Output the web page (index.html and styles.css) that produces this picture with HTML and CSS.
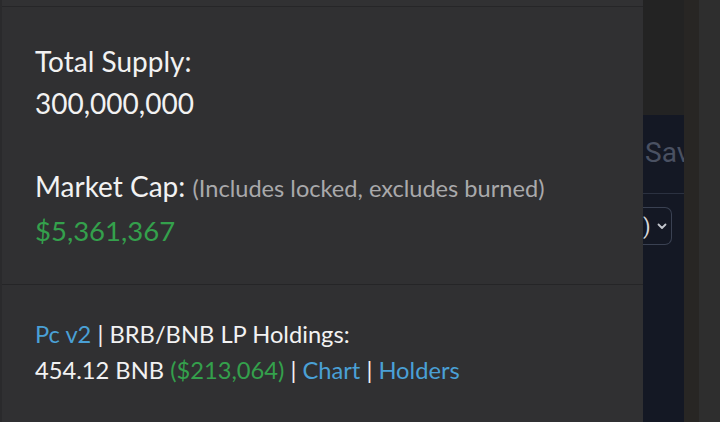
FILE: index.html
```html
<!DOCTYPE html>
<html>
<head>
<meta charset="utf-8">
<link rel="stylesheet" href="styles.css">
</head>
<body>
<div class="page">
  <div class="panel">
    <div class="panel-top"></div>
    <section class="stats">
      <p class="stat">
        <span class="label">Total Supply:</span><br>
        <span class="value">300,000,000</span>
      </p>
      <p class="stat">
        <span class="label">Market Cap:</span> <span class="note">(Includes locked, excludes burned)</span><br>
        <span class="green big">$5,361,367</span>
      </p>
    </section>
    <section class="lp">
      <p class="lp-text">
        <a class="link">Pc v2</a> | BRB/BNB LP Holdings:<br>
        454.12 BNB <span class="green">($213,064)</span> | <a class="link">Chart</a> | <a class="link">Holders</a>
      </p>
    </section>
  </div>
  <div class="behind">
    <div class="behind-top"></div>
    <div class="navy">
      <div class="navy-head"><span class="save">Save</span></div>
      <div class="navy-row">
        <div class="select"><span class="paren">)</span>
          <svg class="chev" width="10" height="7" viewBox="0 0 10 7"><path d="M1.5 1.5 L5 5 L8.5 1.5" fill="none" stroke="#c3c6cd" stroke-width="1.8" stroke-linecap="round" stroke-linejoin="round"/></svg>
        </div>
      </div>
    </div>
  </div>
  <div class="strip-a"></div>
  <div class="strip-b"></div>
</div>
</body>
</html>
```

FILE: styles.css
```css
html, body {
  margin: 0;
  padding: 0;
  background: #222222;
}
.page {
  display: flex;
  width: 720px;
  height: 422px;
  overflow: hidden;
  font-family: Lato, "Noto Sans", sans-serif;
}
.panel {
  width: 641px;
  flex: none;
  background: #303032;
  border-left: 2px solid #2a2a2c;
  display: flex;
  flex-direction: column;
}
.panel-top {
  height: 6px;
  border-bottom: 1px solid #262628;
  background: #313133;
}
.stats {
  padding: 33px 0 32px 33px;
  border-bottom: 1px solid #252527;
}
.stat {
  margin: 0;
  font-size: 28px;
  line-height: 42px;
  color: #f2f2f2;
}
.stat + .stat {
  margin-top: 41px;
}
.note {
  font-size: 23.6px;
  color: #a9a9ab;
}
.green {
  color: #34a04c;
}
.big {
  font-size: 27.5px;
}
.lp {
  padding: 31px 0 0 33px;
  flex: 1;
}
.lp-text {
  margin: 0;
  font-size: 23.7px;
  line-height: 36px;
  color: #f2f2f2;
}
.link {
  color: #4aa0d6;
  text-decoration: none;
}
.behind {
  width: 41px;
  flex: none;
  display: flex;
  flex-direction: column;
}
.behind-top {
  height: 115px;
  background: #232323;
}
.navy {
  flex: 1;
  background: #141824;
}
.navy-head {
  height: 78px;
  border-bottom: 1px solid #2b3140;
  overflow: hidden;
  white-space: nowrap;
  padding-left: 2px;
}
.save {
  display: block;
  font-family: Roboto, "Liberation Sans", sans-serif;
  font-size: 28px;
  line-height: 28px;
  padding-top: 24px;
  color: #4a5162;
}
.navy-row {
  padding-top: 13px;
}
.select {
  width: 28px;
  height: 36px;
  border: 1.5px solid #3a4152;
  border-left: none;
  border-radius: 0 7px 7px 0;
  display: flex;
  align-items: center;
  gap: 6px;
}
.paren {
  font-family: Roboto, sans-serif;
  font-size: 22px;
  color: #d6d6d8;
}
.chev {
  display: block;
}
.strip-a {
  width: 15px;
  flex: none;
  background: #282624;
}
.strip-b {
  flex: 1;
  background: #2e2e2e;
}
```
